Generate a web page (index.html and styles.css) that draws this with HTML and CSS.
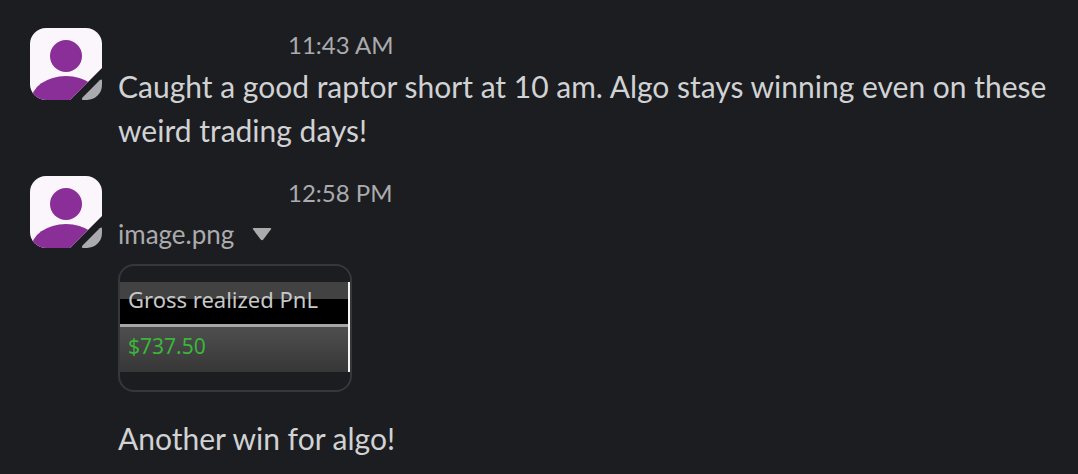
FILE: index.html
```
<!DOCTYPE html>
<html lang="en">
<head>
    <meta charset="UTF-8">
    <meta name="viewport" content="width=device-width, initial-scale=1.0">
    <title>Messages</title>
    <link rel="stylesheet" href="styles.css">
</head>
<body>

    <!-- avatar shared by both messages -->
    <svg class="defs" width="0" height="0" aria-hidden="true">
        <defs>
            <clipPath id="avatar-shape">
                <path d="M16 0H56A16 16 0 0 1 72 16V40L40 72H16A16 16 0 0 1 0 56V16A16 16 0 0 1 16 0Z"/>
            </clipPath>
        </defs>
        <symbol id="avatar" viewBox="0 0 72 72">
            <g clip-path="url(#avatar-shape)">
                <rect width="72" height="72" fill="#faf6fc"/>
                <circle cx="36" cy="28" r="16" fill="#8a2f98"/>
                <ellipse cx="36" cy="73" rx="35" ry="25" fill="#8a2f98"/>
            </g>
            <path d="M69.7 52.3Q72 50.6 72 53V57A15 15 0 0 1 57 72H53Q51 72 52.5 69.5Z" fill="#ababad"/>
        </symbol>
    </svg>

    <main class="messages">
        <article class="message">
            <svg class="avatar" role="img" aria-label="Profile photo"><use href="#avatar"/></svg>
            <div class="message-body">
                <header class="message-header">
                    <span class="sender"></span>
                    <time datetime="11:43">11:43 AM</time>
                </header>
                <p>Caught a good raptor short at 10 am. Algo stays winning even on these weird trading days!</p>
            </div>
        </article>

        <article class="message">
            <svg class="avatar" role="img" aria-label="Profile photo"><use href="#avatar"/></svg>
            <div class="message-body">
                <header class="message-header">
                    <span class="sender"></span>
                    <time datetime="12:58">12:58 PM</time>
                </header>
                <button class="file-toggle" type="button" aria-expanded="true">
                    image.png
                    <svg width="20" height="14" viewBox="0 0 20 14" aria-hidden="true">
                        <path d="M2 1H18Q20 1 18.8 2.6L11.3 12.6Q10 14 8.7 12.6L1.2 2.6Q0 1 2 1Z" fill="#ababad"/>
                    </svg>
                </button>
                <div class="attachment">
                    <table class="pnl">
                        <thead>
                            <tr><th scope="col">Gross realized PnL</th></tr>
                        </thead>
                        <tbody>
                            <tr><td>$737.50</td></tr>
                        </tbody>
                    </table>
                </div>
                <p>Another win for algo!</p>
            </div>
        </article>
    </main>

</body>
</html>
```
FILE: styles.css
```
* {
    box-sizing: border-box;
}

body {
    margin: 0;
    background-color: #1c1d21;
    color: #d1d2d3;
    font-family: Lato, "Liberation Sans", sans-serif;
    font-size: 30px;
    line-height: 44px;
}

.defs {
    position: absolute;
}

.messages {
    display: flex;
    flex-direction: column;
    gap: 22px;
    padding: 26px 30px 12px;
}

.message {
    display: flex;
    gap: 16px;
}

.avatar {
    flex: none;
    width: 72px;
    height: 72px;
    margin-top: 2px;
}

.message-body {
    flex: 1;
    min-width: 0;
}

.message-header {
    display: flex;
    gap: 16px;
}

.sender {
    width: 154px;
}

time {
    color: #ababad;
    font-size: 24px;
    line-height: 38px;
}

p {
    margin: 0;
}

.file-toggle {
    display: flex;
    align-items: center;
    gap: 18px;
    padding: 0;
    border: 0;
    background: none;
    color: #ababad;
    font-family: inherit;
    font-size: 26px;
    line-height: 44px;
    cursor: pointer;
}

.attachment {
    width: 234px;
    margin: 8px 0 24px;
    padding: 16px 0 18px;
    border: 2px solid #36373b;
    border-radius: 16px;
}

.pnl {
    width: 100%;
    border-collapse: separate;
    border-spacing: 0;
    border-right: 2px solid #f4f4f4;
    font-family: "Noto Sans", "Open Sans", sans-serif;
    font-size: 21px;
    line-height: 36px;
    text-align: left;
    white-space: nowrap;
}

.pnl th {
    height: 45px;
    padding: 0 0 8px 8px;
    border-bottom: 3px solid #a6a6a6;
    background: linear-gradient(#424242 17px, #000 17px);
    color: #c8c8c8;
    font-size: 22px;
    line-height: 34px;
    font-weight: 400;
}

.pnl td {
    height: 45px;
    padding: 0 0 8px 8px;
    background: linear-gradient(#4e4e4e, #373737);
    color: #3bb53b;
}
```
